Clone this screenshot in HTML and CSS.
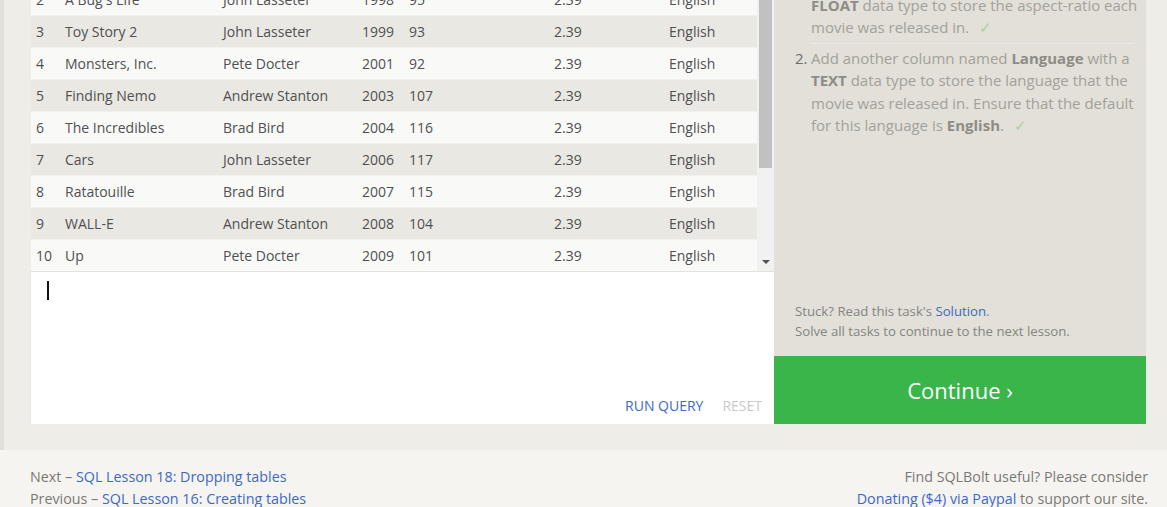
FILE: index.html
```html
<!DOCTYPE html>
<html>
<head>
<meta charset="utf-8">
<title>SQLBolt - Altering tables</title>
<link rel="stylesheet" href="styles.css">
</head>
<body>
<div class="main">
  <div class="left">
    <div class="results">
      <div class="table-view">
        <table class="grid">
          <colgroup>
            <col class="c-id"><col class="c-title"><col class="c-dir"><col class="c-year"><col class="c-len"><col class="c-asp"><col class="c-lang">
          </colgroup>
          <tbody>
            <tr><td>2</td><td>A Bug's Life</td><td>John Lasseter</td><td>1998</td><td>95</td><td>2.39</td><td>English</td></tr>
            <tr><td>3</td><td>Toy Story 2</td><td>John Lasseter</td><td>1999</td><td>93</td><td>2.39</td><td>English</td></tr>
            <tr><td>4</td><td>Monsters, Inc.</td><td>Pete Docter</td><td>2001</td><td>92</td><td>2.39</td><td>English</td></tr>
            <tr><td>5</td><td>Finding Nemo</td><td>Andrew Stanton</td><td>2003</td><td>107</td><td>2.39</td><td>English</td></tr>
            <tr><td>6</td><td>The Incredibles</td><td>Brad Bird</td><td>2004</td><td>116</td><td>2.39</td><td>English</td></tr>
            <tr><td>7</td><td>Cars</td><td>John Lasseter</td><td>2006</td><td>117</td><td>2.39</td><td>English</td></tr>
            <tr><td>8</td><td>Ratatouille</td><td>Brad Bird</td><td>2007</td><td>115</td><td>2.39</td><td>English</td></tr>
            <tr><td>9</td><td>WALL-E</td><td>Andrew Stanton</td><td>2008</td><td>104</td><td>2.39</td><td>English</td></tr>
            <tr><td>10</td><td>Up</td><td>Pete Docter</td><td>2009</td><td>101</td><td>2.39</td><td>English</td></tr>
          </tbody>
        </table>
      </div>
      <div class="scrollbar">
        <div class="thumb"></div>
        <div class="arrow"></div>
      </div>
    </div>
    <div class="editor">
      <div class="cursor"></div>
      <div class="actions">
        <span class="run">Run Query</span>
        <span class="reset">Reset</span>
      </div>
    </div>
  </div>
  <div class="right">
    <div class="tasks-panel">
      <ol class="tasks">
        <li class="task"><span class="num">1.</span><span class="text">Add a column named <b>Aspect_ratio</b> with a<br><b>FLOAT</b> data type to store the aspect-ratio each<br>movie was released in. <span class="check">✓</span></span></li>
        <li class="task"><span class="num">2.</span><span class="text">Add another column named <b>Language</b> with a<br><b>TEXT</b> data type to store the language that the<br>movie was released in. Ensure that the default<br>for this language is <b>English</b>. <span class="check">✓</span></span></li>
      </ol>
      <div class="stuck">
        <div>Stuck? Read this task's <a class="link" href="#">Solution</a>.</div>
        <div>Solve all tasks to continue to the next lesson.</div>
      </div>
    </div>
    <a class="continue" href="#">Continue ›</a>
  </div>
</div>
<div class="footer">
  <div class="nav">
    <div>Next – <a class="link" href="#">SQL Lesson 18: Dropping tables</a></div>
    <div>Previous – <a class="link" href="#">SQL Lesson 16: Creating tables</a></div>
  </div>
  <div class="donate">
    <div>Find SQLBolt useful? Please consider</div>
    <div><a class="link" href="#">Donating ($4) via Paypal</a> to support our site.</div>
  </div>
</div>
</body>
</html>
```

FILE: styles.css
```css
html, body {
  margin: 0;
  padding: 0;
}
body {
  width: 1167px;
  height: 507px;
  overflow: hidden;
  background: #f5f4f0;
  font-family: "Open Sans", "Noto Sans", sans-serif;
  color: #555;
}
.link {
  color: #3d69c6;
  text-decoration: none;
}
.main {
  display: flex;
  background: #efede7;
  border-left: 4px solid #e2e0da;
  padding: 0 21px 26px 27px;
  height: 424px;
}
.left {
  width: 743px;
  display: flex;
  flex-direction: column;
}
.results {
  height: 272px;
  display: flex;
  overflow: hidden;
  border-bottom: 1px solid #e4e2dc;
  box-sizing: border-box;
}
.table-view {
  flex: 1;
  overflow: hidden;
  background: #fafafa;
}
.grid {
  border-collapse: collapse;
  width: 726px;
  table-layout: fixed;
  margin-top: -16px;
  font-size: 14px;
}
.c-id { width: 29px; }
.c-title { width: 158px; }
.c-dir { width: 139px; }
.c-year { width: 47px; }
.c-len { width: 145px; }
.c-asp { width: 115px; }
.c-lang { width: 93px; }
.grid td {
  height: 31px;
  padding: 0 0 0 5px;
  border-bottom: 1px solid #f1f0ec;
  white-space: nowrap;
  overflow: hidden;
  color: #505050;
}
.grid tr:nth-child(odd) td {
  background: #f9f9f8;
}
.grid tr:nth-child(even) td {
  background: #e9e8e2;
}
.scrollbar {
  width: 17px;
  background: #f1f1f1;
  position: relative;
}
.thumb {
  position: absolute;
  left: 2px;
  top: 0;
  width: 13px;
  height: 168px;
  background: #c1c1c1;
}
.arrow {
  position: absolute;
  left: 5px;
  top: 260px;
  width: 0;
  height: 0;
  border-left: 4px solid transparent;
  border-right: 4px solid transparent;
  border-top: 4px solid #505050;
}
.editor {
  flex: 1;
  background: #fff;
  border-left: 1px solid #e4e2dc;
  margin-left: -1px;
  position: relative;
  display: flex;
  flex-direction: column;
  justify-content: flex-end;
}
.cursor {
  position: absolute;
  left: 16px;
  top: 9px;
  width: 2px;
  height: 19px;
  background: #111;
}
.actions {
  display: flex;
  justify-content: flex-end;
  gap: 19px;
  padding: 0 12px 8px 0;
  font-size: 14px;
  text-transform: uppercase;
  line-height: 20px;
}
.run { color: #3d69c6; }
.reset { color: #c9c9c9; }
.right {
  width: 372px;
  display: flex;
  flex-direction: column;
}
.tasks-panel {
  flex: 1;
  background: #e2e0d8;
  padding: 0 12px 15px 21px;
  display: flex;
  flex-direction: column;
  justify-content: space-between;
  overflow: hidden;
}
.tasks {
  list-style: none;
  margin: -29px 0 0 0;
  padding: 0;
  font-size: 15px;
  line-height: 22.5px;
  color: #a3a19b;
}
.task {
  display: flex;
  white-space: nowrap;
  padding: 0 0 4px 0;
}
.task + .task {
  border-top: 1px solid #ebe9e3;
  padding-top: 3px;
  margin-left: 16px;
}
.task + .task .num {
  margin-left: -16px;
}
.num {
  width: 16px;
  color: #6f6e69;
  flex: none;
}
.task b {
  color: #8e8c86;
}
.check {
  color: #9fd4a4;
  margin-left: 6px;
}
.stuck {
  font-size: 13.2px;
  line-height: 20px;
  color: #858480;
}
.continue {
  height: 68px;
  background: #39b54a;
  color: #fff;
  font-size: 22px;
  display: flex;
  align-items: center;
  justify-content: center;
  text-decoration: none;
}
.footer {
  display: flex;
  justify-content: space-between;
  padding: 16px 19px 0 30px;
  font-size: 14.3px;
  line-height: 21.5px;
  color: #7a7975;
}
.donate {
  text-align: right;
}
```
